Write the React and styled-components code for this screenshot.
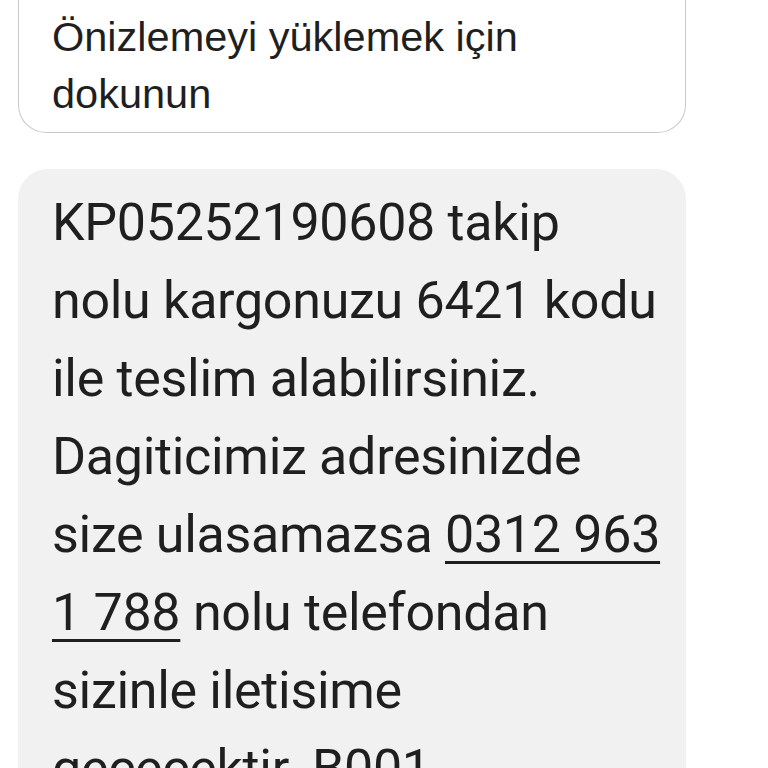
import React from 'react'
import styled, { createGlobalStyle } from 'styled-components'

const Global = createGlobalStyle`
  html, body { margin: 0; background: #ffffff; overflow: hidden; }
`

const Thread = styled.div`
  display: flex;
  flex-direction: column;
  gap: 36px;
  padding: 0 82px 0 18px;
`

const PreviewCard = styled.div`
  background: #ffffff;
  border: 1.5px solid #c9c9c9;
  border-top: none;
  border-radius: 0 0 28px 28px;
  padding: 8px 24px 10px 33px;
  font-family: "Liberation Sans", Arial, sans-serif;
  font-size: 41.5px;
  line-height: 57px;
  color: #1f1f1f;
`

const Bubble = styled.div`
  background: #f1f1f1;
  border-radius: 30px;
  padding: 15px 24px 40px 34px;
  font-family: Roboto, "Noto Sans", sans-serif;
  font-size: 52px;
  letter-spacing: -0.3px;
  line-height: 78px;
  color: #1f1f1f;
`

const Phone = styled.span`
  text-decoration: underline;
  text-decoration-thickness: 3px;
  text-underline-offset: 9px;
`

export default function App() {
  return (
    <>
      <Global />
      <Thread>
        <PreviewCard>Önizlemeyi yüklemek için dokunun</PreviewCard>
        <Bubble>
          KP05252190608 takip nolu kargonuzu 6421 kodu ile teslim alabilirsiniz.
          Dagiticimiz adresinizde size ulasamazsa <Phone>0312 963 1 788</Phone> nolu
          telefondan sizinle iletisime {'gececektir.\u00a0B001'}
        </Bubble>
      </Thread>
    </>
  )
}
